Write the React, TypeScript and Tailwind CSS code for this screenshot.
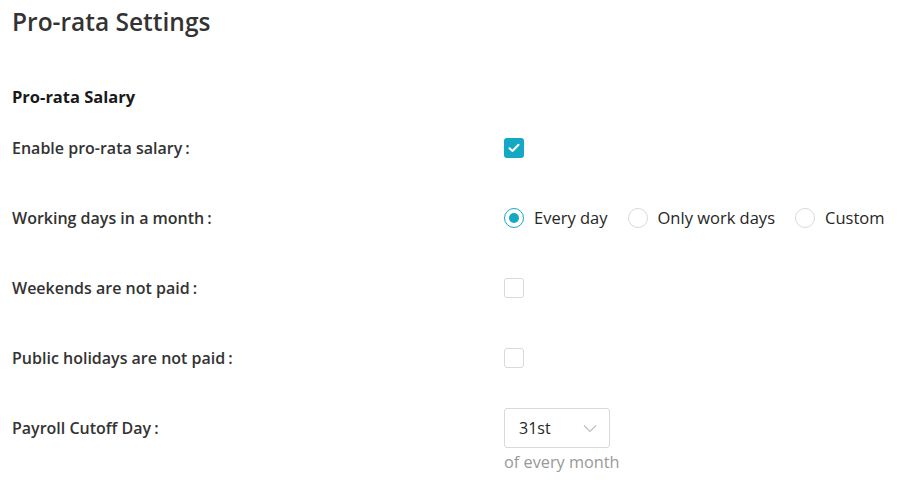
import React from "react";

const font = { fontFamily: '"Open Sans", "Noto Sans", sans-serif' };

function Row({ label, children }: { label: string; children: React.ReactNode }) {
  return (
    <div className="flex items-center h-[40px]">
      <div className="w-[492px] shrink-0 whitespace-nowrap text-[16px] leading-[24px] text-[#333333] font-semibold">
        {label}
        <span className="ml-[3px]">:</span>
      </div>
      <div className="flex items-center whitespace-nowrap">{children}</div>
    </div>
  );
}

function Radio({ checked, label }: { checked?: boolean; label: string }) {
  return (
    <label className="flex items-center mr-[20px] shrink-0 whitespace-nowrap">
      <span
        className={
          "w-[20px] h-[20px] shrink-0 rounded-full border flex items-center justify-center " +
          (checked ? "border-[#14a8c4]" : "border-[#d9d9d9]")
        }
      >
        {checked ? <span className="w-[10px] h-[10px] rounded-full bg-[#14a8c4]" /> : null}
      </span>
      <span className="ml-[10px] text-[16.5px] leading-[24px] text-[#262626]">{label}</span>
    </label>
  );
}

export default function App() {
  return (
    <div className="bg-white w-[901px] h-[488px] pl-[12px] pt-[6px]" style={font}>
      <h1 className="text-[24.5px] leading-[32px] text-[#333333] font-semibold">Pro-rata Settings</h1>
      <h2 className="mt-[47px] text-[16.5px] leading-[24px] font-bold text-[#1a1a1a]">Pro-rata Salary</h2>
      <div className="mt-[19px] flex flex-col gap-[30px]">
        <Row label="Enable pro-rata salary">
          <span className="w-[20px] h-[20px] rounded-[3px] bg-[#14a8c4] flex items-center justify-center">
            <svg width="12" height="10" viewBox="0 0 12 10" fill="none">
              <path d="M1.5 5.2L4.5 8L10.5 1.8" stroke="white" strokeWidth="2" strokeLinecap="round" strokeLinejoin="round" />
            </svg>
          </span>
        </Row>
        <Row label="Working days in a month">
          <Radio checked label="Every day" />
          <Radio label="Only work days" />
          <Radio label="Custom" />
        </Row>
        <Row label="Weekends are not paid">
          <span className="w-[20px] h-[20px] rounded-[3px] border border-[#d9d9d9] bg-white" />
        </Row>
        <Row label="Public holidays are not paid">
          <span className="w-[20px] h-[20px] rounded-[3px] border border-[#d9d9d9] bg-white" />
        </Row>
        <Row label="Payroll Cutoff Day">
          <div className="w-[106px] h-[40px] border border-[#d9d9d9] rounded-[3px] flex items-center justify-between pl-[14px] pr-[12px]">
            <span className="text-[16px] leading-[24px] text-[#262626]">31st</span>
            <svg width="14" height="9" viewBox="0 0 14 9" fill="none">
              <path d="M1 1.5L7 7.5L13 1.5" stroke="#bfbfbf" strokeWidth="1.2" />
            </svg>
          </div>
        </Row>
      </div>
      <div className="ml-[492px] mt-[2px] text-[16.3px] leading-[24px] text-[#999999]">of every month</div>
    </div>
  );
}
